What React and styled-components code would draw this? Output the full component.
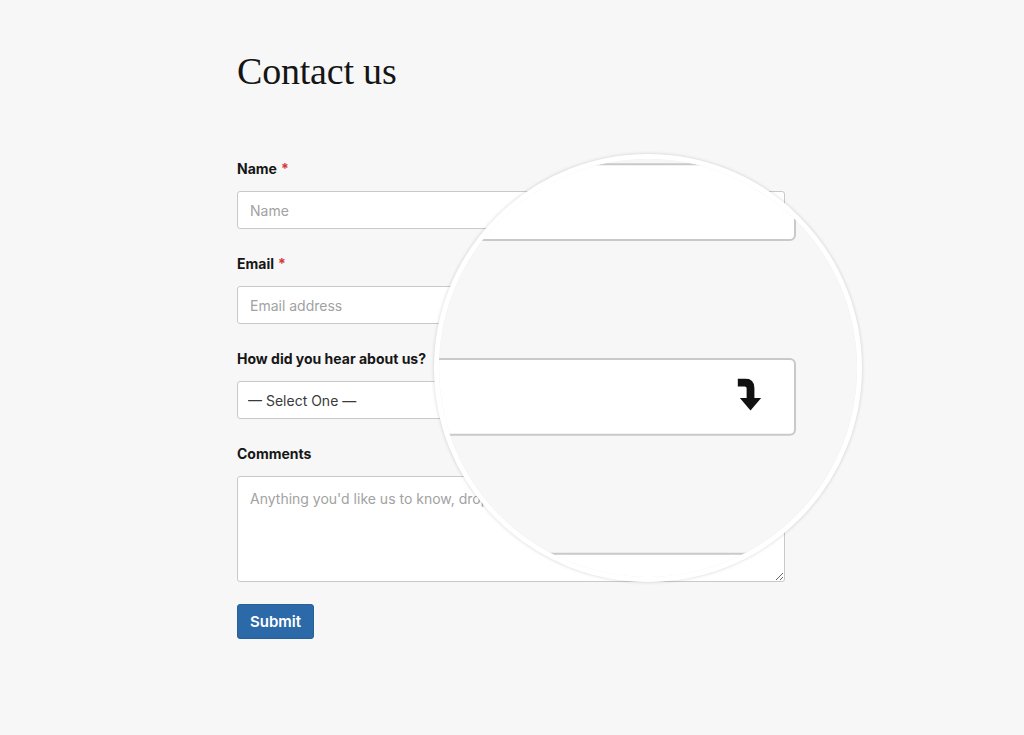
import React from 'react';
import styled, { createGlobalStyle } from 'styled-components';

const GlobalStyle = createGlobalStyle`
  html, body {
    margin: 0;
    padding: 0;
    background: #f7f7f7;
  }
  * {
    box-sizing: border-box;
  }
`;

const Stage = styled.div`
  position: relative;
  width: 1024px;
  height: 735px;
  overflow: hidden;
  background: #f7f7f7;
`;

const Page = styled.div`
  width: 1024px;
  height: 735px;
  padding: 52px 0 0 237px;
  background: #f7f7f7;
  font-family: Inter, "Liberation Sans", sans-serif;
`;

const Column = styled.form`
  width: 548px;
  display: flex;
  flex-direction: column;
`;

const Title = styled.h1`
  height: 38px;
  margin: 0 0 70px;
  font-family: "Liberation Serif", serif;
  font-weight: 400;
  font-size: 38px;
  line-height: 38px;
  color: #151515;
  letter-spacing: -0.2px;
`;

const Field = styled.div`
  display: flex;
  flex-direction: column;
  gap: 14px;
  margin-bottom: ${(p) => p.$after || 26}px;
`;

const Label = styled.label`
  height: 17px;
  font-size: 14px;
  line-height: 17px;
  font-weight: 700;
  color: #161616;

  span {
    color: #d63637;
    margin-left: 4px;
  }
`;

const inputBase = `
  width: 100%;
  background: #fff;
  border: 1px solid #c9c9c9;
  border-radius: 3px;
  font-family: Inter, "Liberation Sans", sans-serif;
  font-size: 14px;
  color: #333;
  outline: none;
  margin: 0;
  &::placeholder {
    color: #a2a2a2;
  }
`;

const TextInput = styled.input`
  ${inputBase}
  height: 38px;
  padding: 0 12px;
`;

const SelectWrap = styled.div`
  position: relative;
  height: 38px;
`;

const Select = styled.select`
  ${inputBase}
  height: 38px;
  padding: 0 40px 0 10px;
  appearance: none;
  -webkit-appearance: none;
  color: #3a3a3a;
`;

const ArrowIcon = styled.svg`
  position: absolute;
  right: 17px;
  top: 10px;
  width: 12px;
  height: 16px;
  pointer-events: none;
`;

const TextArea = styled.textarea`
  ${inputBase}
  height: 106px;
  padding: 12px;
  line-height: 20px;
  resize: vertical;
`;

const SubmitButton = styled.button`
  align-self: flex-start;
  height: 35px;
  min-width: 77px;
  padding: 0 12px;
  background: #2c69a9;
  border: 1px solid #275f99;
  border-radius: 3px;
  color: #fff;
  font-family: Inter, "Liberation Sans", sans-serif;
  font-size: 15px;
  font-weight: 600;
  cursor: pointer;
`;

const Lens = styled.div`
  position: absolute;
  left: 434px;
  top: 154px;
  width: 428px;
  height: 428px;
  border-radius: 50%;
  border: 5px solid #fff;
  overflow: hidden;
  background: #f7f7f7;
  box-shadow: 0 0 3px 1px rgba(0, 0, 0, 0.1), inset 0 0 2px 1px rgba(0, 0, 0, 0.11);
`;

const LensView = styled.div`
  position: absolute;
  left: -439px;
  top: -159px;
  transform-origin: 774.5px 403px;
  transform: scale(${(p) => p.$zoom});
  pointer-events: none;
`;

const DropArrow = () => (
  <ArrowIcon viewBox="0 0 12 16">
    <path
      d="M0.6 2 H4 Q6.8 2 6.8 4.8 V10.5"
      fill="none"
      stroke="#111"
      strokeWidth="3.8"
      strokeLinejoin="round"
    />
    <polygon points="1.6,9.6 12,9.6 6.8,15.7" fill="#111" />
  </ArrowIcon>
);

// bare: the magnified copy only shows the field boxes, so it is drawn without its texts
const ContactForm = ({ bare }) => (
  <Page>
    <Column onSubmit={(e) => e.preventDefault()}>
      <Title>{bare ? null : 'Contact us'}</Title>
      <Field>
        <Label>
          {bare ? null : (
            <>
              Name<span>*</span>
            </>
          )}
        </Label>
        <TextInput type="text" placeholder={bare ? '' : 'Name'} tabIndex={bare ? -1 : 0} />
      </Field>
      <Field>
        <Label>
          {bare ? null : (
            <>
              Email<span>*</span>
            </>
          )}
        </Label>
        <TextInput type="email" placeholder={bare ? '' : 'Email address'} tabIndex={bare ? -1 : 0} />
      </Field>
      <Field>
        <Label>{bare ? null : 'How did you hear about us?'}</Label>
        <SelectWrap>
          <Select defaultValue="" tabIndex={bare ? -1 : 0}>
            {bare ? (
              <option value="" />
            ) : (
              <>
                <option value="">— Select One —</option>
                <option value="search">Search engine</option>
                <option value="friend">Friend</option>
                <option value="social">Social media</option>
              </>
            )}
          </Select>
          <DropArrow />
        </SelectWrap>
      </Field>
      <Field $after={22}>
        <Label>{bare ? null : 'Comments'}</Label>
        <TextArea
          placeholder={bare ? '' : "Anything you'd like us to know, drop it here."}
          tabIndex={bare ? -1 : 0}
        />
      </Field>
      <SubmitButton type="submit" tabIndex={bare ? -1 : 0}>
        {bare ? null : 'Submit'}
      </SubmitButton>
    </Column>
  </Page>
);

const App = () => {
  return (
    <>
      <GlobalStyle />
      <Stage>
        <ContactForm />
        <Lens>
          <LensView $zoom={2.05} aria-hidden="true">
            <ContactForm bare />
          </LensView>
        </Lens>
      </Stage>
    </>
  );
};

export default App;
